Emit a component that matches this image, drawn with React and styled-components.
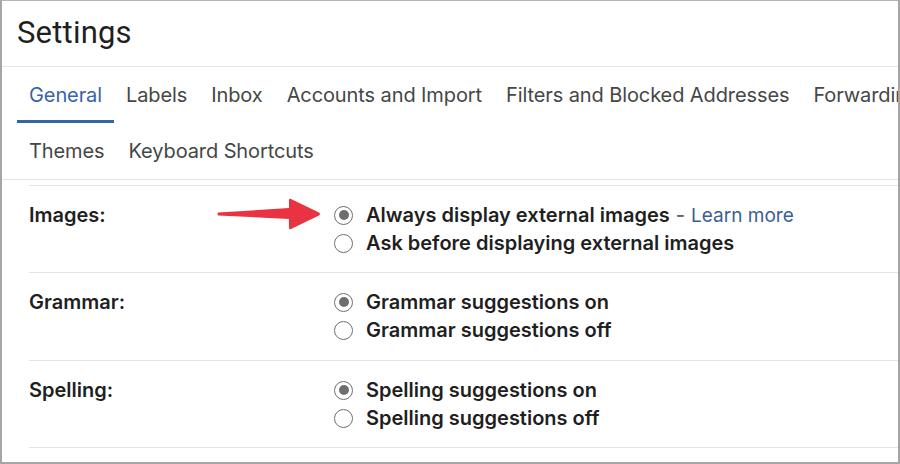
import React from "react";
import styled, { createGlobalStyle } from "styled-components";

const Global = createGlobalStyle`
  html, body { margin: 0; padding: 0; background: #ffffff; }
  body { font-family: Inter, "Open Sans", sans-serif; }
  * { box-sizing: border-box; }
`;

const Frame = styled.div`
  position: relative;
  width: 900px;
  height: 464px;
  border-left: 2px solid #a6a6a6;
  border-top: 1px solid #b4b4b4;
  border-right: 2px solid #a6a6a6;
  border-bottom: 2px solid #a6a6a6;
  overflow: hidden;
  background: #fff;
`;

const TitleBar = styled.div`
  height: 66px;
  display: flex;
  align-items: center;
  padding-left: 15px;
  padding-bottom: 2px;
  border-bottom: 1px solid #e6e6e6;
`;

const Title = styled.h1`
  margin: 0;
  font-family: Roboto, sans-serif;
  font-size: 31px;
  font-weight: 400;
  color: #1f1f1f;
  letter-spacing: 0.2px;
`;

const TabRow = styled.div`
  display: flex;
  height: ${(p) => p.$h}px;
  padding-left: 15px;
  white-space: nowrap;
  border-bottom: ${(p) => (p.$divider ? "1px solid #e6e6e6" : "none")};
`;

const Tab = styled.div`
  display: flex;
  align-items: center;
  padding: 3px 12px 0;
  font-size: 20px;
  font-weight: 400;
  letter-spacing: -0.1px;
  color: ${(p) => (p.$active ? "#3565a9" : "#444746")};
  border-bottom: 3px solid ${(p) => (p.$active ? "#3565a9" : "transparent")};
`;

const Rows = styled.div`
  margin-top: 5px;
  margin-left: 27px;
  border-top: 1px solid #e3e3e3;
`;

const Row = styled.div`
  position: relative;
  display: flex;
  height: ${(p) => p.$h}px;
  padding-top: 15px;
  border-bottom: 1px solid #e3e3e3;
`;

const Label = styled.div`
  width: 305px;
  flex: none;
  font-size: 20px;
  font-weight: 600;
  line-height: 28px;
  color: #1f1f1f;
`;

const Options = styled.div`
  display: flex;
  flex-direction: column;
`;

const Option = styled.label`
  display: flex;
  align-items: center;
  height: 28px;
  font-size: 20px;
  font-weight: 600;
  color: #1f1f1f;
  white-space: nowrap;
`;

const Radio = styled.span`
  width: 19px;
  height: 19px;
  margin-right: 13px;
  border-radius: 50%;
  border: 1.5px solid #6f6f6f;
  flex: none;
  display: flex;
  align-items: center;
  justify-content: center;
  &::after {
    content: "";
    width: 10px;
    height: 10px;
    border-radius: 50%;
    background: ${(p) => (p.$checked ? "#6e6e6e" : "transparent")};
  }
`;

const Dash = styled.span`
  color: #5f6368;
  font-weight: 500;
  margin: 0 6px;
`;

const Link = styled.span`
  color: #3a5e98;
  font-size: 19px;
  font-weight: 400;
`;

const Arrow = styled.svg`
  position: absolute;
  left: 188px;
  top: 12px;
`;

const rows = [
  {
    label: "Images:",
    h: 87,
    arrow: true,
    opts: ["Always display external images", "Ask before displaying external images"],
    link: true,
  },
  { label: "Grammar:", h: 88, opts: ["Grammar suggestions on", "Grammar suggestions off"] },
  { label: "Spelling:", h: 87, opts: ["Spelling suggestions on", "Spelling suggestions off"] },
];

export default function App() {
  return (
    <>
      <Global />
      <Frame>
        <TitleBar>
          <Title>Settings</Title>
        </TitleBar>
        <TabRow $h={56}>
          <Tab $active>General</Tab>
          <Tab>Labels</Tab>
          <Tab>Inbox</Tab>
          <Tab>Accounts and Import</Tab>
          <Tab>Filters and Blocked Addresses</Tab>
          <Tab>Forwarding and POP/IMAP</Tab>
        </TabRow>
        <TabRow $h={57} $divider>
          <Tab>Themes</Tab>
          <Tab>Keyboard Shortcuts</Tab>
        </TabRow>
        <Rows>
          {rows.map((r) => (
            <Row key={r.label} $h={r.h}>
              <Label>{r.label}</Label>
              <Options>
                {r.opts.map((o, i) => (
                  <Option key={o}>
                    <Radio $checked={i === 0} />
                    {o}
                    {r.link && i === 0 && (
                      <>
                        <Dash>-</Dash>
                        <Link>Learn more</Link>
                      </>
                    )}
                  </Option>
                ))}
              </Options>
              {r.arrow && (
                <Arrow width="110" height="36" viewBox="0 0 110 36">
                  <path
                    d="M1 14.6 L72 10 L72 2 Q72 0 74 1 L102 14.5 Q104 16 102 17.5 L74 31 Q72 32 72 30 L72 21 L1 17.4 Q0 16 1 14.6 Z"
                    fill="#ea3342"
                  />
                </Arrow>
              )}
            </Row>
          ))}
        </Rows>
      </Frame>
    </>
  );
}
